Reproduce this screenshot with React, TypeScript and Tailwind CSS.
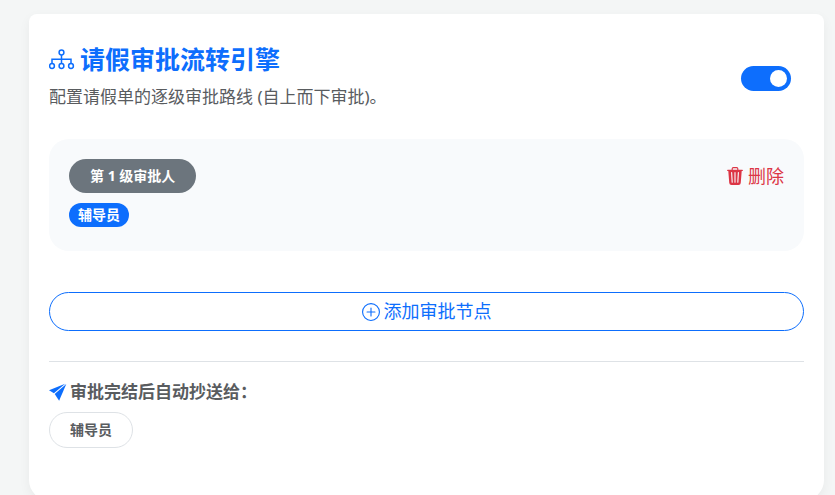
import React, { useState } from 'react';
import { BsPlusCircle, BsTrash3Fill } from 'react-icons/bs';

interface ApprovalNode {
  id: number;
  role: string;
}

function FlowIcon() {
  return (
    <svg viewBox="0 0 26 26" className="size-[26px]" fill="none" stroke="currentColor" strokeWidth="1.5" aria-hidden="true">
      <circle cx="12.5" cy="5.5" r="2.4" />
      <circle cx="3" cy="19" r="2.4" />
      <circle cx="12.5" cy="19" r="2.4" />
      <circle cx="22" cy="19" r="2.4" />
      <path d="M12.5 8v8.5M3 16.5v-4.2h19v4.2" />
    </svg>
  );
}

function SendIcon() {
  return (
    <svg viewBox="0 0 18 18" className="size-[18px] text-[#0d6efd]" fill="currentColor" aria-hidden="true">
      <path d="M16.2.7 0 7.2l4.9 3.1z" />
      <path d="M17.3.9 5.7 10.9l4.4 6.8z" />
    </svg>
  );
}

function NodeCard({ level, role, onRemove }: { level: number; role: string; onRemove: () => void }) {
  return (
    <div className="h-28 rounded-[20px] bg-[#f8fafc] p-5">
      <div className="flex h-[34px] items-center justify-between">
        <span className="flex h-[34px] items-center rounded-full bg-[#6c757d] px-[21px] text-sm font-bold text-white">
          第 {level} 级审批人
        </span>
        <button onClick={onRemove} className="flex items-center gap-1 text-[18px] text-[#dc3545]">
          <BsTrash3Fill className="size-[18px]" />
          删除
        </button>
      </div>
      <span className="mt-2.5 inline-flex h-6 items-center rounded-full bg-[#0d6efd] px-[9px] text-sm font-bold text-white">
        {role}
      </span>
    </div>
  );
}

export default function App() {
  const [enabled, setEnabled] = useState(true);
  const [nodes, setNodes] = useState<ApprovalNode[]>([{ id: 1, role: '辅导员' }]);
  const copyTo = ['辅导员'];

  const addNode = () => setNodes([...nodes, { id: Date.now(), role: '辅导员' }]);
  const removeNode = (id: number) => setNodes(nodes.filter((n) => n.id !== id));

  return (
    <div className="min-h-screen overflow-hidden bg-[#f4f6f6] pt-3.5 pr-[11px] pl-[29px] font-['Noto_Sans','Noto_Sans_CJK_SC',sans-serif]">
      <main className="rounded-t-lg rounded-b-[20px] bg-white px-5 pt-7 pb-[52px] shadow-[0_4px_12px_rgba(0,0,0,0.05)]">
        <header className="flex items-center justify-between pr-[13px]">
          <div>
            <h1 className="flex h-9 items-center gap-[5px] text-[25px] font-bold text-[#0d6efd]">
              <FlowIcon />
              请假审批流转引擎
            </h1>
            <p className="h-[38px] text-[17px] leading-[38px] text-[#595c5f]">
              配置请假单的逐级审批路线 (自上而下审批)。
            </p>
          </div>
          <label className="relative mb-0.5 h-[25px] w-[50px] cursor-pointer">
            <input
              type="checkbox"
              role="switch"
              aria-label="请假审批流转引擎"
              checked={enabled}
              onChange={(e) => setEnabled(e.target.checked)}
              className="peer block h-[25px] w-[50px] appearance-none rounded-full bg-gray-300 checked:bg-[#0d6efd]"
            />
            <span className="pointer-events-none absolute top-1 left-1 size-[17px] rounded-full bg-white transition-transform peer-checked:translate-x-[25px]" />
          </label>
        </header>

        <div className="mt-[23px] flex flex-col gap-4">
          {nodes.map((node, i) => (
            <NodeCard key={node.id} level={i + 1} role={node.role} onRemove={() => removeNode(node.id)} />
          ))}
        </div>

        <button
          onClick={addNode}
          className="mt-[41px] flex h-[39px] w-full items-center justify-center gap-1 rounded-full border border-[#0d6efd] text-[18px] text-[#0d6efd]"
        >
          <BsPlusCircle className="size-[18px]" />
          添加审批节点
        </button>

        <section className="mt-[30px] border-t border-[#dee2e6] pt-[17px]">
          <h2 className="flex h-[26px] items-center gap-[3px] text-[17px] font-bold text-[#595c5f]">
            <SendIcon />
            审批完结后自动抄送给：
          </h2>
          <div className="mt-[7px] flex flex-wrap gap-2">
            {copyTo.map((role) => (
              <span
                key={role}
                className="flex h-9 items-center rounded-full border border-[#dee2e6] px-5 text-sm font-semibold text-[#595c5f]"
              >
                {role}
              </span>
            ))}
          </div>
        </section>
      </main>
    </div>
  );
}
